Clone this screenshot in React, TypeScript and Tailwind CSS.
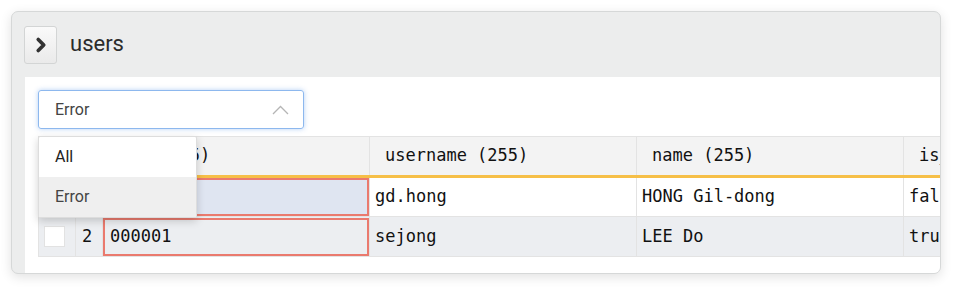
import { ChevronRight } from 'lucide-react'

const mono = { fontFamily: '"DejaVu Sans Mono", "Liberation Mono", monospace' }

const COLS = [
  { key: 'uid',      label: 'uid (255)' },
  { key: 'username', label: 'username (255)' },
  { key: 'name',     label: 'name (255)' },
  { key: 'is',       label: 'is_admin' },
]

const ROWS = [
  { n: 1, uid: '',       username: 'gd.hong', name: 'HONG Gil-dong', is: 'false' },
  { n: 2, uid: '000001', username: 'sejong',  name: 'LEE Do',        is: 'true' },
]

export default function App() {
  return (
    <div className="w-[963px] h-[297px] bg-white pt-[11px] pl-[11px] font-['Roboto',sans-serif]">
      <div className="w-[930px] h-[263px] rounded-[7px] border border-[#d6d8d8] bg-[#eceded] shadow-[0_3px_12px_rgba(0,0,0,0.12)] overflow-hidden flex flex-col">
        {/* Header */}
        <div className="h-[65px] shrink-0 flex items-center pl-[12px] gap-[13px]">
          <button className="w-[33px] h-[38px] rounded-[3px] border border-[#d3d5d5] bg-gradient-to-b from-[#fafafa] to-[#eaeaea] flex items-center justify-center">
            <ChevronRight className="w-[22px] h-[22px] text-[#333]" strokeWidth={4} />
          </button>
          <span className="text-[22px] text-[#2b2b2b] leading-none pb-[2px]">users</span>
        </div>

        {/* Content */}
        <div className="flex-1 ml-[13px] bg-white pl-[13px] pt-[13px] overflow-hidden">
          <div className="w-[266px] h-[39px] rounded-[3px] border border-[#8db8ee] shadow-[0_0_5px_rgba(90,150,230,0.45)] flex items-center justify-between pl-[16px] pr-[14px]">
            <span className="text-[16px] text-[#444]">Error</span>
            <svg width="17" height="10" viewBox="0 0 17 10" fill="none">
              <path d="M1 9 L8.5 1.5 L16 9" stroke="#b5b5b5" strokeWidth="1.3" />
            </svg>
          </div>

          <div className="relative mt-[7px] w-[1000px]">
            <table className="table-fixed w-[985px] border-collapse text-[17px] text-[#111]" style={mono}>
              <colgroup>
                <col className="w-[37px]" />
                <col className="w-[27px]" />
                <col className="w-[267px]" />
                <col className="w-[267px]" />
                <col className="w-[267px]" />
                <col className="w-[120px]" />
              </colgroup>
              <thead>
                <tr className="h-[40px] bg-[#f3f3f3]">
                  <th className="border border-[#e3e3e3] border-b-[3px] border-b-[#f6bf47]" />
                  <th className="border border-[#e3e3e3] border-b-[3px] border-b-[#f6bf47]" />
                  {COLS.map(c => (
                    <th key={c.key} className="border border-[#e3e3e3] border-b-[3px] border-b-[#f6bf47] text-left font-normal pl-[15px] whitespace-nowrap">{c.label}</th>
                  ))}
                </tr>
              </thead>
              <tbody>
                {ROWS.map(r => {
                  const alt = r.n % 2 === 0
                  return (
                    <tr key={r.n} className={`h-[40px] ${alt ? 'bg-[#eceef1]' : 'bg-white'}`}>
                      <td className="border border-[#e3e3e3] px-[5px]">
                        <div className="w-[21px] h-[21px] bg-white border border-[#e2e2e2]" />
                      </td>
                      <td className="border border-[#e3e3e3] pl-[6px]">{r.n}</td>
                      <td className="border border-[#e3e3e3] p-0 h-[40px]">
                        <div className={`h-[38px] border-2 border-[#ea7a6e] pl-[5px] flex items-center ${alt ? '' : 'bg-[#dfe5f1]'}`}>{r.uid}</div>
                      </td>
                      <td className="border border-[#e3e3e3] pl-[5px] whitespace-nowrap">{r.username}</td>
                      <td className="border border-[#e3e3e3] pl-[5px] whitespace-nowrap">{r.name}</td>
                      <td className="border border-[#e3e3e3] pl-[5px] whitespace-nowrap">{r.is}</td>
                    </tr>
                  )
                })}
              </tbody>
            </table>

            {/* Dropdown menu */}
            <div className="absolute left-0 top-0 w-[159px] bg-white rounded-[2px] border border-[#dddddd] shadow-[0_3px_8px_rgba(0,0,0,0.18)] text-[16px] text-[#333]">
              <div className="h-[40px] flex items-center pl-[16px] text-[#222]">All</div>
              <div className="h-[40px] flex items-center pl-[16px] bg-[#efefef] text-[#444]">Error</div>
            </div>
          </div>
        </div>
      </div>
    </div>
  )
}
